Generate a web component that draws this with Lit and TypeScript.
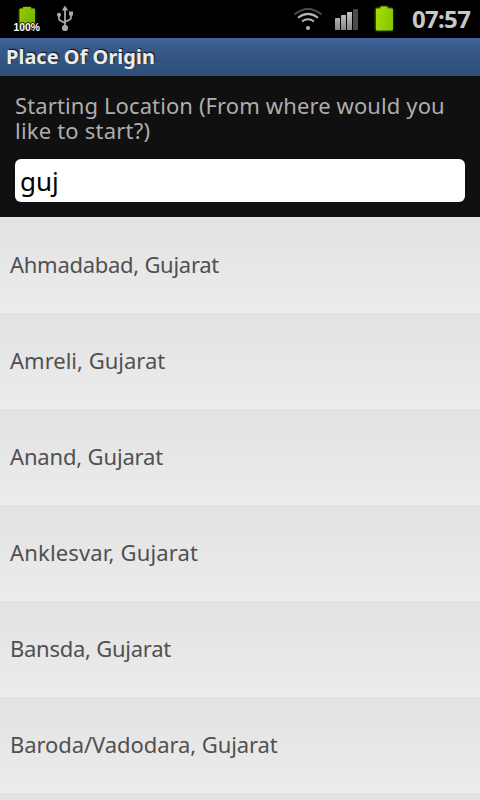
import { LitElement, html, css } from "lit";
import { customElement, state } from "lit/decorators.js";
import { styleMap } from "lit/directives/style-map.js";

@customElement("status-bar")
class StatusBar extends LitElement {
  static styles = css`
    :host {
      display: flex;
      align-items: center;
      height: 38px;
      background: #000;
      color: #c8c8c8;
      box-sizing: border-box;
    }
    .icons {
      display: block;
      flex: none;
    }
    .spacer {
      flex: 1;
    }
    .pct {
      font: bold 10px "Liberation Sans", sans-serif;
      fill: #fff;
      stroke: #000;
      stroke-width: 1.5px;
      paint-order: stroke;
    }
    .clock {
      width: 68px;
      font: bold 24px/38px "Noto Sans", sans-serif;
      letter-spacing: -0.7px;
      white-space: nowrap;
    }
  `;

  render() {
    return html`
      <svg class="icons" width="90" height="38" viewBox="0 0 90 38">
        <defs>
          <linearGradient id="cell" x1="0" x2="1" y1="0" y2="1">
            <stop offset="0" stop-color="#94d000" />
            <stop offset="1" stop-color="#70a800" />
          </linearGradient>
          <filter id="glow" x="-30%" y="-30%" width="160%" height="160%">
            <feGaussianBlur stdDeviation="1" />
          </filter>
        </defs>
        <path d="M19 9h4V7h8v2h4v21H19z" fill="#3c6500" filter="url(#glow)" />
        <path d="M19.5 9.5q0-1 1-1H23V7h8v1.500h3q1 0 1 1V30H19.500z" fill="url(#cell)" />
        <text class="pct" x="13.500" y="30.500" textLength="26.500" lengthAdjust="spacingAndGlyphs">100%</text>
        <g fill="none" stroke="#a9a9a9" stroke-width="1.800">
          <path d="M65 9v19M59 15.500v3q0 1.700 1.700 2.300L65 23M71 13.500v4q0 1.700-1.700 2.300L65 22" />
        </g>
        <g fill="#a9a9a9">
          <path d="M65 5.500l3.200 5h-6.400z" />
          <circle cx="65" cy="28" r="3.100" />
          <circle cx="59" cy="14.800" r="2.100" />
          <path d="M69 11.500h4v4h-4z" />
        </g>
      </svg>
      <div class="spacer"></div>
      <svg class="icons" width="122" height="38" viewBox="290 0 122 38">
        <defs>
          <linearGradient id="bars" x1="0" x2="0" y1="0" y2="1">
            <stop offset="0" stop-color="#c4c4c4" />
            <stop offset="1" stop-color="#8a8a8a" />
          </linearGradient>
          <linearGradient id="full" x1="0" x2="1" y1="0" y2="0.300">
            <stop offset="0" stop-color="#a8de00" />
            <stop offset="1" stop-color="#86c800" />
          </linearGradient>
          <filter id="halo" x="-30%" y="-30%" width="160%" height="160%">
            <feGaussianBlur stdDeviation="1" />
          </filter>
        </defs>
        <g fill="none" stroke-width="2">
          <path d="M294.500 14.500q13.500-11 27 0" stroke="#4c4c4c" />
          <path d="M298 17.700q10-7.600 20 0" stroke="#b4b4b4" />
          <path d="M302 21.500q6-4.300 12 0" stroke="#b4b4b4" />
        </g>
        <circle cx="308" cy="28" r="2.100" fill="#b4b4b4" />
        <path d="M335 19q0-1 1-1h4v12h-5zM341 16q0-1 1-1h4v15h-5zM347 13q0-1 1-1h4v18h-5z" fill="url(#bars)" />
        <path d="M353 10q0-1 1-1h4v21h-5z" fill="#4b4b4b" />
        <path d="M375.500 8h5V6.500h7V8h5v22.500h-17z" fill="#5d9800" filter="url(#halo)" />
        <path d="M376 9.500q0-1 1-1h3.500V6.500h7v2H392q1 0 1 1V29q0 1.500-1 1.500h-15q-1 0-1-1.500z" fill="url(#full)" />
      </svg>
      <div class="clock">07:57</div>
    `;
  }
}

@customElement("place-row")
class PlaceRow extends LitElement {
  static styles = css`
    :host {
      display: flex;
      align-items: center;
      flex: none;
      height: 96px;
      padding: 0 10px 2px;
      box-sizing: border-box;
      background: linear-gradient(#e2e2e2, #ececec);
      color: #505050;
      font: 22px/30px "Noto Sans", sans-serif;
      white-space: nowrap;
    }
  `;

  render() {
    return html`<slot></slot>`;
  }
}

@customElement("app-root")
class AppRoot extends LitElement {
  static styles = css`
    :host {
      display: flex;
      flex-direction: column;
      width: 480px;
      height: 800px;
      overflow: hidden;
      background: #e4e4e4;
    }
    .title {
      flex: none;
      height: 38px;
      padding-left: 6px;
      box-sizing: border-box;
      background: linear-gradient(#42669a, #37598a 30%, #2d4e76);
      color: #ececec;
      font: bold 20px/37px "Noto Sans", sans-serif;
      text-shadow: 1px -1px 1px #111;
    }
    .search {
      flex: none;
      height: 141px;
      padding: 17px 15px 15px;
      box-sizing: border-box;
      background: #101010;
    }
    .label {
      color: #adadad;
      font: 22px/25px "Noto Sans", sans-serif;
      letter-spacing: 0.11px;
      white-space: nowrap;
    }
    .label-end {
      letter-spacing: 0.2px;
    }
    .field {
      display: block;
      width: 450px;
      height: 43px;
      margin-top: 16px;
      padding: 0 5px;
      box-sizing: border-box;
      border: 0;
      border-radius: 6px;
      outline: none;
      background: #fff;
      color: #000;
      font: 26px "Noto Sans", sans-serif;
    }
    .list {
      display: flex;
      flex-direction: column;
      flex: 1;
      min-height: 0;
      overflow: hidden;
    }
  `;

  @state() private query = "guj";

  private places = [
    { name: "Ahmadabad, Gujarat", tracking: -0.28 },
    { name: "Amreli, Gujarat", tracking: 0 },
    { name: "Anand, Gujarat", tracking: -0.16 },
    { name: "Anklesvar, Gujarat", tracking: 0.16 },
    { name: "Bansda, Gujarat", tracking: -0.26 },
    { name: "Baroda/Vadodara, Gujarat", tracking: -0.08 },
    { name: "", tracking: 0 },
  ];

  render() {
    return html`
      <status-bar></status-bar>
      <div class="title">Place Of Origin</div>
      <div class="search">
        <div class="label">Starting Location (From where would you</div>
        <div class="label label-end">like to start?)</div>
        <input class="field" .value=${this.query} />
      </div>
      <div class="list">
        ${this.places.map(
          ({ name, tracking }) =>
            html`<place-row style=${styleMap({ letterSpacing: `${tracking}px` })}>${name}</place-row>`
        )}
      </div>
    `;
  }
}
